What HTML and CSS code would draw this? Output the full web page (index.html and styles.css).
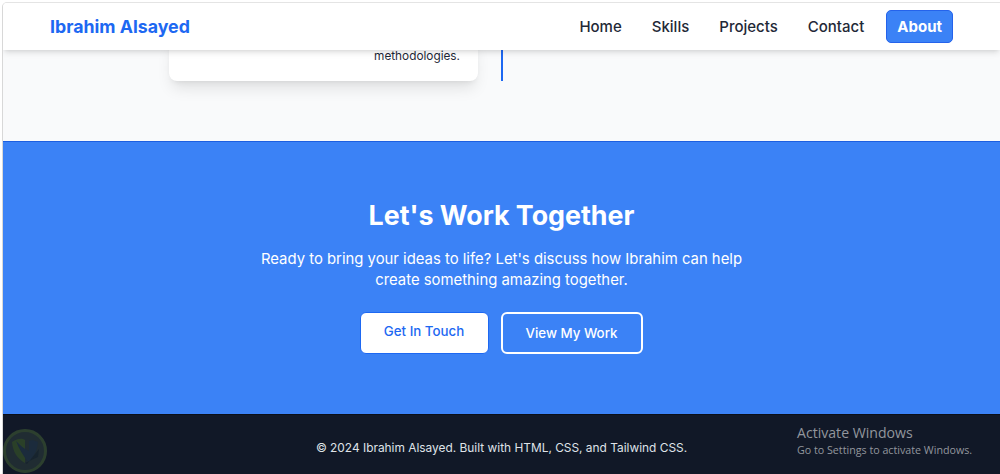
FILE: index.html
```html
<!DOCTYPE html>
<html lang="en">
<head>
    <meta charset="UTF-8">
    <meta name="viewport" content="width=device-width, initial-scale=1.0">
    <title>Ibrahim Alsayed</title>
    <link rel="stylesheet" href="styles.css">
</head>
<body>
    <div class="page">
        <nav class="navbar">
            <a class="brand" href="#">Ibrahim Alsayed</a>
            <div class="nav-links">
                <a class="nav-link" href="#">Home</a>
                <a class="nav-link" href="#">Skills</a>
                <a class="nav-link" href="#">Projects</a>
                <a class="nav-link" href="#">Contact</a>
                <a class="nav-link active" href="#">About</a>
            </div>
        </nav>

        <section class="timeline">
            <div class="timeline-row">
                <div class="timeline-card">
                    <p>methodologies.</p>
                </div>
                <div class="timeline-line"></div>
            </div>
        </section>

        <section class="cta">
            <h2>Let's Work Together</h2>
            <p>Ready to bring your ideas to life? Let's discuss how Ibrahim can help create something amazing together.</p>
            <div class="cta-buttons">
                <a class="btn btn-white" href="#">Get In Touch</a>
                <a class="btn btn-outline" href="#">View My Work</a>
            </div>
        </section>

        <footer class="footer">
            <p>© 2024 Ibrahim Alsayed. Built with HTML, CSS, and Tailwind CSS.</p>
        </footer>
    </div>

    <!-- desktop overlays -->
    <svg class="shield-mark" width="48" height="48" viewBox="0 0 48 48">
        <circle cx="24" cy="24" r="20.5" fill="#2a3a3a" stroke="#3f5a34" stroke-width="3"/>
        <path d="M11 15 C17 11 21 11 24 13 L24 36 C17 32 12 26 11 15 Z" fill="#3c5c2a"/>
        <path d="M15 14 C18 22 22 28 27 35 C33 30 36 24 37 15 C33 13 30 13 28 14 L28 24 C23 22 19 18 15 14 Z" fill="#22384a"/>
        <path d="M24 36 L26 37 L38 22 L37 30 Z" fill="#1c2c34"/>
    </svg>
    <div class="activate">
        <div class="activate-title">Activate Windows</div>
        <div class="activate-sub">Go to Settings to activate Windows.</div>
    </div>
</body>
</html>
```

FILE: styles.css
```css
body, html {
    font-family: 'Inter', sans-serif;
    margin: 0;
    padding: 0;
    height: 100%;
    overflow: hidden;
    background-color: #fff;
}
.page {
    display: flex;
    flex-direction: column;
    height: 472px;
    box-sizing: border-box;
    margin-top: 2px;
    margin-left: 2px;
    border-top: 1px solid #e4e4e4;
    border-left: 1px solid #d8d8d8;
    border-top-left-radius: 5px;
    overflow: hidden;
}
.navbar {
    position: relative;
    z-index: 10;
    flex: none;
    display: flex;
    align-items: center;
    justify-content: space-between;
    height: 47px;
    padding: 0 47px;
    background-color: #fff;
    box-shadow: 0 4px 6px -1px rgba(0,0,0,0.1), 0 2px 4px -2px rgba(0,0,0,0.1);
}
.brand {
    font-size: 17.75px;
    font-weight: 700;
    color: #1d68f2;
    text-decoration: none;
}
.nav-links {
    display: flex;
    align-items: center;
    gap: 14px;
}
.nav-link {
    padding: 8px 8px;
    font-size: 15px;
    font-weight: 500;
    line-height: 17px;
    color: #1f2937;
    text-decoration: none;
}
.nav-link.active {
    padding: 7px 10px;
    background-color: #3b82f6;
    border: 1px solid #2563eb;
    border-radius: 5px;
    color: #fff;
    font-weight: 700;
}
.timeline {
    flex: none;
    height: 91px;
    background-color: #f9fafb;
}
.timeline-row {
    display: flex;
    margin-left: 166px;
    margin-top: -14px;
}
.timeline-card {
    width: 309px;
    height: 45px;
    box-sizing: border-box;
    padding: 10px 18px 0 0;
    background-color: #fff;
    border-radius: 8px;
    box-shadow: 0 10px 15px -3px rgba(0,0,0,0.1), 0 4px 6px -4px rgba(0,0,0,0.1);
}
.timeline-card p {
    margin: 0;
    font-size: 11.8px;
    line-height: 20px;
    text-align: right;
    color: #1f2937;
}
.timeline-line {
    width: 2px;
    height: 45px;
    margin-left: 23px;
    background-color: #1d68f2;
}
.cta {
    flex: none;
    box-sizing: border-box;
    height: 273px;
    padding-top: 55px;
    background-color: #3b82f6;
    border-top: 1px solid #1d5fe0;
    text-align: center;
    color: #fff;
}
.cta h2 {
    margin: 0;
    font-size: 26.8px;
    font-weight: 700;
    line-height: 36px;
}
.cta p {
    width: 500px;
    margin: 16px auto 0;
    font-size: 14.87px;
    line-height: 20.6px;
}
.cta-buttons {
    display: flex;
    justify-content: center;
    gap: 12px;
    margin-top: 21.8px;
}
.btn {
    display: flex;
    align-items: center;
    justify-content: center;
    box-sizing: border-box;
    height: 42px;
    border-radius: 6px;
    font-size: 13.3px;
    font-weight: 500;
    text-decoration: none;
}
.btn-white {
    width: 129px;
    margin-left: -1px;
    padding-bottom: 3px;
    background-color: #fff;
    border: 1px solid #1d68f2;
    color: #1d68f2;
}
.btn-outline {
    width: 142px;
    background-color: #3b82f6;
    border: 2px solid #fff;
    color: #fff;
}
.footer {
    flex: 1;
    display: flex;
    align-items: center;
    justify-content: center;
    padding-top: 5px;
    background-color: #111827;
    border-top: 1px solid #0b0f18;
    color: #dfe2e7;
}
.footer p {
    margin: 0;
    font-size: 11.9px;
}
.shield-mark {
    position: absolute;
    left: 1px;
    top: 427px;
    opacity: 0.6;
    filter: blur(0.6px);
}
.activate {
    position: absolute;
    left: 797px;
    top: 424px;
    font-family: 'Open Sans', sans-serif;
    color: #92969d;
}
.activate-title {
    font-size: 14.1px;
    line-height: 18px;
}
.activate-sub {
    font-size: 10.7px;
    line-height: 16px;
}
```
